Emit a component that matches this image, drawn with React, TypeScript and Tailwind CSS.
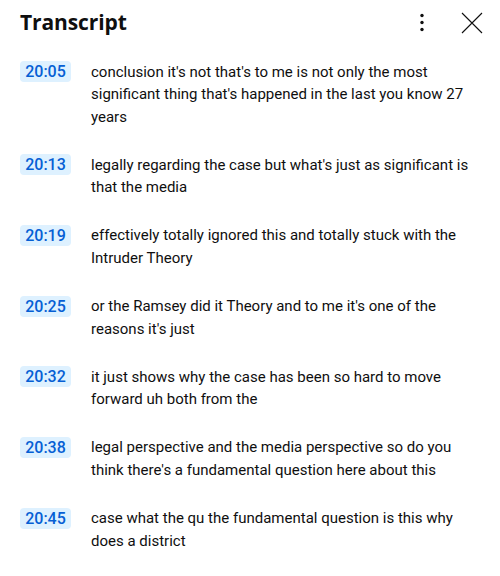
const segments = [
  {
    time: '20:05',
    text: "conclusion it's not that's to me is not only the most significant thing that's happened in the last you know 27 years",
  },
  {
    time: '20:13',
    text: "legally regarding the case but what's just as significant is that the media",
  },
  {
    time: '20:19',
    text: 'effectively totally ignored this and totally stuck with the Intruder Theory',
  },
  {
    time: '20:25',
    text: "or the Ramsey did it Theory and to me it's one of the reasons it's just",
  },
  {
    time: '20:32',
    text: 'it just shows why the case has been so hard to move forward uh both from the',
  },
  {
    time: '20:38',
    text: "legal perspective and the media perspective so do you think there's a fundamental question here about this",
  },
  {
    time: '20:45',
    text: 'case what the qu the fundamental question is this why does a district',
  },
];

export default function App() {
  return (
    <div className="w-[500px] h-[576px] overflow-hidden bg-white font-['Roboto',sans-serif] text-[#0f0f0f]">
      {/* Header */}
      <div className="flex items-center h-[44px] pl-5 pr-4 pt-[1px]">
        <h2 className="flex-1 text-[21px] font-bold tracking-[-0.1px] font-['Open_Sans',sans-serif]">Transcript</h2>
        <button className="w-6 h-6 flex items-center justify-center mr-[26px]">
          <svg viewBox="0 0 24 24" className="w-6 h-6" fill="#0f0f0f">
            <circle cx="12" cy="4.5" r="1.7" />
            <circle cx="12" cy="11.5" r="1.7" />
            <circle cx="12" cy="18.5" r="1.7" />
          </svg>
        </button>
        <button className="w-6 h-6 flex items-center justify-center">
          <svg viewBox="0 0 24 24" className="w-6 h-6" fill="none" stroke="#0f0f0f" strokeWidth="1.1">
            <path d="M2 2 L22 22 M22 2 L2 22" />
          </svg>
        </button>
      </div>

      {/* Segments */}
      <div className="flex flex-col gap-[26.2px] pt-[17px] pl-5 pr-[20px]">
        {segments.map((s) => (
          <div key={s.time} className="flex items-start">
            <span className="shrink-0 w-[51px] h-[21px] rounded-[4px] bg-[#def1ff] text-[#065fd4] text-[16px] font-medium leading-[21px] text-center">
              {s.time}
            </span>
            <p className="ml-5 text-[15px] leading-[22.5px] -mt-[0.5px]">{s.text}</p>
          </div>
        ))}
      </div>
    </div>
  );
}
